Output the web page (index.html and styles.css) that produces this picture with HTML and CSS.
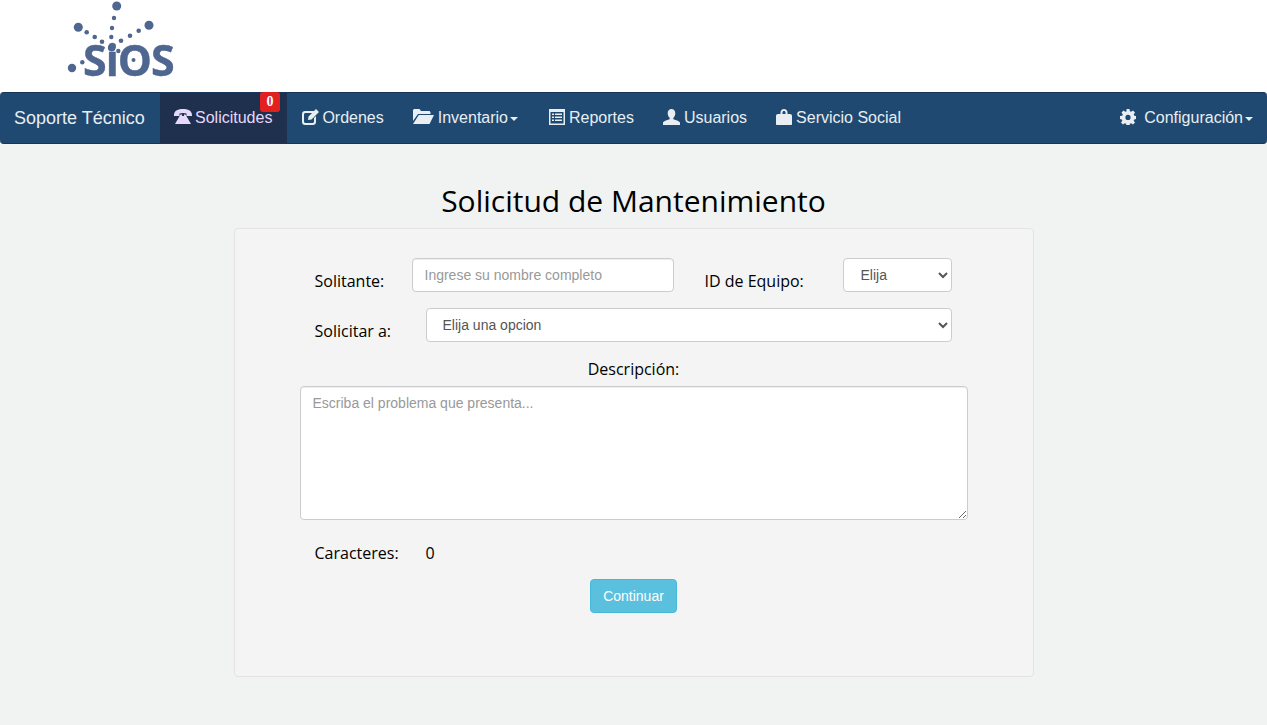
FILE: index.html
```html
<!DOCTYPE html>
<html>
<head>
  <meta charset="utf-8">
  <title>Soporte Técnico - Solicitud de Mantenimiento</title>
  <link rel="stylesheet" href="styles.css">
</head>
<body>
  <header class="top">
    <div class="logo">
      <svg width="130" height="92" viewBox="60 0 130 92">
        <g fill="#4f6690">
          <circle cx="116.7" cy="6" r="4.5"/>
          <circle cx="114" cy="18" r="2.2"/>
          <circle cx="112" cy="28" r="2.2"/>
          <circle cx="111.3" cy="37" r="2.2"/>
          <circle cx="78.3" cy="27.3" r="4.5"/>
          <circle cx="86.7" cy="32.3" r="2.3"/>
          <circle cx="94.7" cy="37" r="2.3"/>
          <circle cx="102" cy="41.7" r="2.3"/>
          <circle cx="149" cy="25.3" r="4.5"/>
          <circle cx="138.7" cy="30.7" r="2.3"/>
          <circle cx="130" cy="35.7" r="2.3"/>
          <circle cx="121" cy="40.7" r="2.3"/>
          <circle cx="118.3" cy="51" r="2.2"/>
          <circle cx="82.3" cy="62.3" r="2.2"/>
          <circle cx="72" cy="68" r="4.2"/>
          <circle cx="111.7" cy="47.7" r="3.8"/>
          <text class="logo-text" x="83" y="76">SiOS</text>
          <circle cx="133.5" cy="60" r="2"/>
        </g>
      </svg>
    </div>
  </header>

  <nav class="navbar">
    <a class="brand" href="#">Soporte Técnico</a>
    <ul class="nav">
      <li class="active">
        <a href="#">
          <svg class="gap3" width="18" height="15" viewBox="0 0 18 15"><path fill="currentColor" d="M0 6C0 1.500 4.500 0 9 0s9 1.500 9 6v1h-5.500V4.600C11.500 4.200 10.300 4 9 4s-2.500.2-3.500.6V7H0zM6.500 5.500H8V7h2V5.500h1.500L17 15H1z"/></svg>Solicitudes
        </a>
        <span class="badge">0</span>
      </li>
      <li>
        <a href="#">
          <svg class="gap3" width="17" height="16" viewBox="0 0 17 16"><path fill="currentColor" d="M3 2h9L10 4H3.500C2.700 4 2 4.700 2 5.500v7c0 .8.7 1.500 1.500 1.500h7c.8 0 1.500-.7 1.500-1.500V9l2-2v6c0 1.700-1.300 3-3 3H3c-1.700 0-3-1.300-3-3V5c0-1.700 1.300-3 3-3zM14 0l3 3-7.500 7.500-3.500.5.500-3.500z"/></svg>Ordenes
        </a>
      </li>
      <li>
        <a class="has-caret" href="#">
          <svg class="gap4" width="21" height="15" viewBox="0 0 21 15"><path fill="currentColor" d="M0 1.500C0 .7.700 0 1.500 0h5L8 2h8c.8 0 1.500.7 1.500 1.500V5H5L0 12zM5.800 6H21l-4.500 9H0z"/></svg>Inventario<span class="caret"></span>
        </a>
      </li>
      <li>
        <a href="#">
          <svg class="gap4" width="16" height="16" viewBox="0 0 16 16"><path fill="currentColor" fill-rule="evenodd" d="M0 0h16v16H0zM1.500 3v11.500h13V3zM3 4.500h2v1.500H3zM6 4.500h7v1.500H6zM3 7.500h2V9H3zM6 7.500h7V9H6zM3 10.500h2V12H3zM6 10.500h7V12H6z"/></svg>Reportes
        </a>
      </li>
      <li>
        <a href="#">
          <svg class="gap4" width="17" height="16" viewBox="0 0 17 16"><path fill="currentColor" d="M8.500 0c2.300 0 3.800 1.800 3.800 4.200 0 2-.9 3.700-2 4.700v1.400c2.500.7 6.700 2 6.700 3.700v2H0v-2c0-1.700 4.200-3 6.700-3.700V8.900c-1.100-1-2-2.700-2-4.700C4.700 1.800 6.200 0 8.500 0z"/></svg>Usuarios
        </a>
      </li>
      <li>
        <a href="#">
          <svg class="gap4" width="16" height="16" viewBox="0 0 16 16"><path fill="currentColor" fill-rule="evenodd" d="M4.500 5V3.500C4.500 1.300 6 0 8 0s3.500 1.300 3.500 3.500V5H14c1.200 0 2 .8 2 2v8c0 .6-.4 1-1 1H1c-.6 0-1-.4-1-1V7c0-1.200.8-2 2-2zM6.500 5h3V3.500C9.500 2.600 8.900 2 8 2s-1.500.6-1.500 1.500z"/></svg>Servicio Social
        </a>
      </li>
    </ul>
    <ul class="nav nav-right">
      <li>
        <a href="#">
          <svg class="gap8" width="16" height="16" viewBox="0 0 16 16"><path fill="currentColor" fill-rule="evenodd" d="M6.500 0h3l.4 2.200 1.300.6L13 1.500l2 2-1.300 1.900.6 1.300 2.200.4v2.900l-2.200.4-.6 1.300 1.300 1.900-2 2-1.900-1.300-1.200.5-.4 2.200h-3l-.4-2.200-1.300-.5L3 15.600l-2-2 1.300-1.900-.6-1.300L0 10V7.100l2.200-.4.600-1.300L1.500 3.500l2-2 1.800 1.300 1.300-.6zM8 5.800a2.600 2.600 0 1 0 0 5.200 2.600 2.600 0 0 0 0-5.200z"/></svg>Configuración<span class="caret"></span>
        </a>
      </li>
    </ul>
  </nav>

  <main class="content">
    <h1>Solicitud de Mantenimiento</h1>
    <form class="card">
      <div class="row row-first">
        <label class="label-name" for="nombre">Solitante:</label>
        <input class="control input-name" id="nombre" type="text" placeholder="Ingrese su nombre completo">
        <label class="label-equipo" for="equipo">ID de Equipo:</label>
        <select class="control select-equipo" id="equipo">
          <option>Elija</option>
        </select>
      </div>
      <div class="row">
        <label class="label-to" for="destino">Solicitar a:</label>
        <select class="control select-to" id="destino">
          <option>Elija una opcion</option>
        </select>
      </div>
      <label class="label-desc" for="descripcion">Descripción:</label>
      <textarea class="control area" id="descripcion" placeholder="Escriba el problema que presenta..."></textarea>
      <div class="count">
        <span class="count-label">Caracteres:</span>
        <span>0</span>
      </div>
      <div class="actions">
        <button class="btn" type="button">Continuar</button>
      </div>
    </form>
  </main>
</body>
</html>
```

FILE: styles.css
```css
* {
  box-sizing: border-box;
}
body {
  margin: 0;
  height: 725px;
  overflow: hidden;
  background-color: #f1f3f3;
  font-family: "Liberation Sans", Arial, sans-serif;
  font-size: 14px;
  color: #000;
}

.top {
  height: 92px;
  background-color: #fff;
}
.logo {
  margin-left: 60px;
  height: 92px;
}
.logo svg {
  display: block;
  filter: blur(0.5px);
}
.logo-text {
  font-family: "Open Sans", sans-serif;
  font-size: 43px;
  font-weight: 700;
  letter-spacing: -1px;
  stroke: #4f6690;
  stroke-width: 0.4px;
}

.navbar {
  display: flex;
  height: 52px;
  background-color: #1f4971;
  border-top: 1px solid #17375a;
  border-bottom: 1px solid #17375a;
  border-radius: 4px;
}
.brand {
  padding-left: 14px;
  width: 160px;
  line-height: 50px;
  font-size: 18px;
  color: #e8eef2;
  text-decoration: none;
  white-space: nowrap;
}
.nav {
  display: flex;
  margin: 0;
  padding: 0;
  list-style: none;
}
.nav-right {
  margin-left: auto;
}
.nav li {
  position: relative;
}
.nav a {
  display: flex;
  align-items: center;
  height: 50px;
  padding: 0 15px 0 14px;
  font-size: 16px;
  color: #e8eef2;
  text-decoration: none;
  white-space: nowrap;
}
.nav a svg {
  margin-bottom: 3px;
}
.nav li:nth-child(2) a {
  padding-left: 15px;
  padding-right: 15px;
}
.nav a.has-caret {
  padding-right: 17px;
}
.nav-right a {
  padding: 0 14px;
}
.nav li.active a {
  background-color: #1f304e;
  color: #e6d8fa;
}
.gap3 {
  margin-right: 3px;
}
.gap4 {
  margin-right: 4px;
}
.gap8 {
  margin-right: 8px;
}
.caret {
  margin-left: 2px;
  margin-top: 2px;
  border-top: 4px solid currentColor;
  border-left: 4px solid transparent;
  border-right: 4px solid transparent;
}
.badge {
  position: absolute;
  top: -1px;
  left: 100px;
  width: 20px;
  height: 20px;
  background-color: #e32020;
  border-radius: 3px;
  color: #fff;
  font-family: "Liberation Serif", serif;
  font-size: 14px;
  font-weight: bold;
  line-height: 20px;
  text-align: center;
}

.content {
  width: 800px;
  margin: 0 auto;
}
h1 {
  margin: 0;
  padding-top: 37px;
  height: 84px;
  font-family: "Open Sans", sans-serif;
  font-size: 30px;
  font-weight: 400;
  line-height: 40px;
  text-align: center;
}
.card {
  height: 449px;
  padding: 30px 0 0 65px;
  background-color: #f4f4f4;
  border: 1px solid #e3e3e3;
  border-radius: 4px;
}
.row {
  display: flex;
  align-items: flex-start;
  padding-left: 15px;
}
.row-first {
  height: 49px;
  margin-top: -1px;
  margin-bottom: 1px;
}
label, .count {
  font-family: "Open Sans", sans-serif;
  font-size: 16px;
  font-weight: 500;
}
.label-name, .label-equipo, .label-to {
  padding-top: 12px;
}
.label-name {
  width: 97px;
}
.label-equipo {
  width: 138px;
  margin-left: 31px;
}
.label-to {
  width: 111px;
}
.control {
  display: block;
  height: 34px;
  padding: 6px 12px;
  background-color: #fff;
  border: 1px solid #ccc;
  border-radius: 4px;
  font-family: "Liberation Sans", Arial, sans-serif;
  font-size: 14px;
  color: #555;
}
.control::placeholder {
  color: #999;
}
.input-name {
  width: 262px;
  box-shadow: inset 0 1px 1px rgba(0, 0, 0, 0.075);
}
.select-equipo {
  width: 109px;
  padding-left: 13px;
}
.select-to {
  width: 526px;
}
.label-desc {
  display: block;
  width: 668px;
  margin-top: 16px;
  height: 28px;
  text-align: center;
}
.area {
  width: 668px;
  height: 134px;
  padding-top: 8px;
  box-shadow: inset 0 1px 1px rgba(0, 0, 0, 0.075);
}
.count {
  display: flex;
  margin-top: 22px;
  padding-left: 15px;
  height: 23px;
}
.count-label {
  width: 111px;
}
.actions {
  width: 668px;
  margin-top: 14px;
  text-align: center;
}
.btn {
  width: 87px;
  height: 34px;
  padding: 0;
  background-color: #5bc0de;
  border: 1px solid #46b8da;
  border-radius: 4px;
  color: #fff;
  font-family: "Liberation Sans", Arial, sans-serif;
  font-size: 14px;
}
```
